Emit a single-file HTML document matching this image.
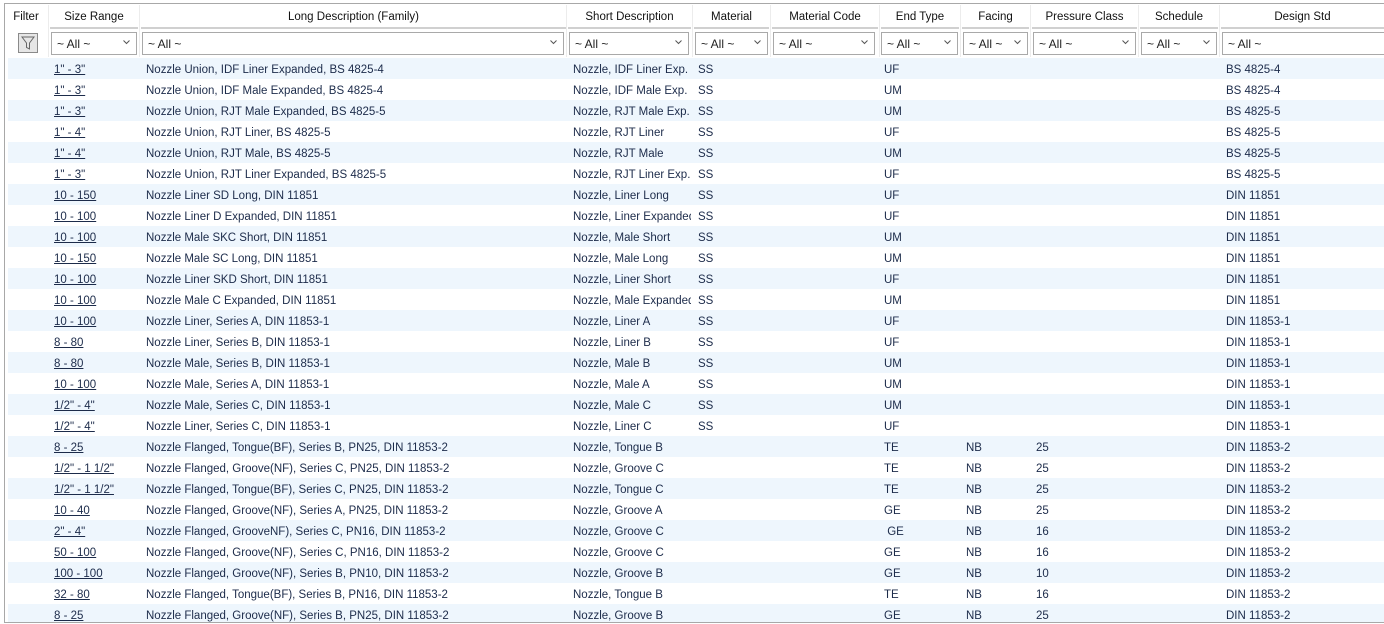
<!DOCTYPE html>
<html><head><meta charset="utf-8"><style>
*{margin:0;padding:0;box-sizing:border-box}
body{width:1384px;height:624px;background:#fff;font-family:"Liberation Sans",sans-serif;font-size:11.5px;position:relative;overflow:hidden}
.frame{position:absolute;left:4px;top:3px;width:1390px;height:620px;border:1px solid #a8a8a8}
.h{position:absolute;top:11px;text-align:center;color:#111;font-size:11.5px}
.hl{position:absolute;top:27px;height:2px;background:#d0d0d0}
.vs{position:absolute;top:5px;width:1px;height:52px;background:#ececec}
.cb{position:absolute;top:32px;height:23px;border:1px solid #a9a9a9;background:#fff;color:#222;padding-left:5px;line-height:22px;font-size:12px}
.cb svg{position:absolute;right:6px;top:7px}
.r{position:absolute;left:8px;width:1380px;height:21px}
.r.a{background:#eef6fd}
.r span{position:absolute;top:6px;color:#1c2b4a;white-space:nowrap;font-size:11.5px}
.r span.s{left:46px;text-decoration:underline}
.r span.l{left:138px}.r span.sd{left:565px;width:118px;overflow:hidden}.r span.m{left:690px}.r span.e{left:876px}.r span.f{left:958px}.r span.p{left:1028px}.r span.d{left:1218px}
.fb{position:absolute;left:18px;top:33px;width:20px;height:20px;border:1px solid #8a8a8a;background:#e6e6e6}
</style></head><body>
<div class="frame"></div>
<div class="h" style="left:5px;width:42px">Filter</div>
<div class="h" style="left:50px;width:88px">Size Range</div>
<div class="h" style="left:141px;width:425px">Long Description (Family)</div>
<div class="h" style="left:568px;width:123px">Short Description</div>
<div class="h" style="left:694px;width:75px">Material</div>
<div class="h" style="left:772px;width:106px">Material Code</div>
<div class="h" style="left:881px;width:78px">End Type</div>
<div class="h" style="left:962px;width:67px">Facing</div>
<div class="h" style="left:1032px;width:105px">Pressure Class</div>
<div class="h" style="left:1140px;width:78px">Schedule</div>
<div class="h" style="left:1221px;width:163px">Design Std</div>
<div class="hl" style="left:50px;width:88px"></div><div class="hl" style="left:141px;width:425px"></div><div class="hl" style="left:568px;width:123px"></div><div class="hl" style="left:694px;width:75px"></div><div class="hl" style="left:772px;width:106px"></div><div class="hl" style="left:881px;width:78px"></div><div class="hl" style="left:962px;width:67px"></div><div class="hl" style="left:1032px;width:105px"></div><div class="hl" style="left:1140px;width:78px"></div><div class="hl" style="left:1221px;width:163px"></div>
<div class="vs" style="left:48px"></div><div class="vs" style="left:139px"></div><div class="vs" style="left:566px"></div><div class="vs" style="left:692px"></div><div class="vs" style="left:770px"></div><div class="vs" style="left:879px"></div><div class="vs" style="left:960px"></div><div class="vs" style="left:1030px"></div><div class="vs" style="left:1138px"></div><div class="vs" style="left:1219px"></div>
<div class="fb"><svg width="18" height="18" viewBox="0 0 18 18"><path d="M3 3h12l-4.5 6v6l-3-1.5V9z" fill="none" stroke="#666" stroke-width="1"/></svg></div>
<div class="cb" style="left:51px;width:86px">~ All ~<svg width="7" height="5"><path d="M0.5 0.5L3.5 3.5L6.5 0.5" fill="none" stroke="#555"/></svg></div>
<div class="cb" style="left:142px;width:422px">~ All ~<svg width="7" height="5"><path d="M0.5 0.5L3.5 3.5L6.5 0.5" fill="none" stroke="#555"/></svg></div>
<div class="cb" style="left:569px;width:120px">~ All ~<svg width="7" height="5"><path d="M0.5 0.5L3.5 3.5L6.5 0.5" fill="none" stroke="#555"/></svg></div>
<div class="cb" style="left:695px;width:73px">~ All ~<svg width="7" height="5"><path d="M0.5 0.5L3.5 3.5L6.5 0.5" fill="none" stroke="#555"/></svg></div>
<div class="cb" style="left:773px;width:102px">~ All ~<svg width="7" height="5"><path d="M0.5 0.5L3.5 3.5L6.5 0.5" fill="none" stroke="#555"/></svg></div>
<div class="cb" style="left:881px;width:77px">~ All ~<svg width="7" height="5"><path d="M0.5 0.5L3.5 3.5L6.5 0.5" fill="none" stroke="#555"/></svg></div>
<div class="cb" style="left:963px;width:65px">~ All ~<svg width="7" height="5"><path d="M0.5 0.5L3.5 3.5L6.5 0.5" fill="none" stroke="#555"/></svg></div>
<div class="cb" style="left:1033px;width:103px">~ All ~<svg width="7" height="5"><path d="M0.5 0.5L3.5 3.5L6.5 0.5" fill="none" stroke="#555"/></svg></div>
<div class="cb" style="left:1141px;width:76px">~ All ~<svg width="7" height="5"><path d="M0.5 0.5L3.5 3.5L6.5 0.5" fill="none" stroke="#555"/></svg></div>
<div class="cb" style="left:1222px;width:170px">~ All ~</div>

<div class="r a" style="top:58px"><span class="s">1" - 3"</span><span class="l">Nozzle Union, IDF Liner Expanded, BS 4825-4</span><span class="sd">Nozzle, IDF Liner Exp.</span><span class="m">SS</span><span class="e">UF</span><span class="d">BS 4825-4</span></div>
<div class="r" style="top:79px"><span class="s">1" - 3"</span><span class="l">Nozzle Union, IDF Male Expanded, BS 4825-4</span><span class="sd">Nozzle, IDF Male Exp.</span><span class="m">SS</span><span class="e">UM</span><span class="d">BS 4825-4</span></div>
<div class="r a" style="top:100px"><span class="s">1" - 3"</span><span class="l">Nozzle Union, RJT Male Expanded, BS 4825-5</span><span class="sd">Nozzle, RJT Male Exp.</span><span class="m">SS</span><span class="e">UM</span><span class="d">BS 4825-5</span></div>
<div class="r" style="top:121px"><span class="s">1" - 4"</span><span class="l">Nozzle Union, RJT Liner, BS 4825-5</span><span class="sd">Nozzle, RJT Liner</span><span class="m">SS</span><span class="e">UF</span><span class="d">BS 4825-5</span></div>
<div class="r a" style="top:142px"><span class="s">1" - 4"</span><span class="l">Nozzle Union, RJT Male, BS 4825-5</span><span class="sd">Nozzle, RJT Male</span><span class="m">SS</span><span class="e">UM</span><span class="d">BS 4825-5</span></div>
<div class="r" style="top:163px"><span class="s">1" - 3"</span><span class="l">Nozzle Union, RJT Liner Expanded, BS 4825-5</span><span class="sd">Nozzle, RJT Liner Exp.</span><span class="m">SS</span><span class="e">UF</span><span class="d">BS 4825-5</span></div>
<div class="r a" style="top:184px"><span class="s">10 - 150</span><span class="l">Nozzle Liner SD Long, DIN 11851</span><span class="sd">Nozzle, Liner Long</span><span class="m">SS</span><span class="e">UF</span><span class="d">DIN 11851</span></div>
<div class="r" style="top:205px"><span class="s">10 - 100</span><span class="l">Nozzle Liner D Expanded, DIN 11851</span><span class="sd">Nozzle, Liner Expanded</span><span class="m">SS</span><span class="e">UF</span><span class="d">DIN 11851</span></div>
<div class="r a" style="top:226px"><span class="s">10 - 100</span><span class="l">Nozzle Male SKC Short, DIN 11851</span><span class="sd">Nozzle, Male Short</span><span class="m">SS</span><span class="e">UM</span><span class="d">DIN 11851</span></div>
<div class="r" style="top:247px"><span class="s">10 - 150</span><span class="l">Nozzle Male SC Long, DIN 11851</span><span class="sd">Nozzle, Male Long</span><span class="m">SS</span><span class="e">UM</span><span class="d">DIN 11851</span></div>
<div class="r a" style="top:268px"><span class="s">10 - 100</span><span class="l">Nozzle Liner SKD Short, DIN 11851</span><span class="sd">Nozzle, Liner Short</span><span class="m">SS</span><span class="e">UF</span><span class="d">DIN 11851</span></div>
<div class="r" style="top:289px"><span class="s">10 - 100</span><span class="l">Nozzle Male C Expanded, DIN 11851</span><span class="sd">Nozzle, Male Expanded</span><span class="m">SS</span><span class="e">UM</span><span class="d">DIN 11851</span></div>
<div class="r a" style="top:310px"><span class="s">10 - 100</span><span class="l">Nozzle Liner, Series A, DIN 11853-1</span><span class="sd">Nozzle, Liner A</span><span class="m">SS</span><span class="e">UF</span><span class="d">DIN 11853-1</span></div>
<div class="r" style="top:331px"><span class="s">8 - 80</span><span class="l">Nozzle Liner, Series B, DIN 11853-1</span><span class="sd">Nozzle, Liner B</span><span class="m">SS</span><span class="e">UF</span><span class="d">DIN 11853-1</span></div>
<div class="r a" style="top:352px"><span class="s">8 - 80</span><span class="l">Nozzle Male, Series B, DIN 11853-1</span><span class="sd">Nozzle, Male B</span><span class="m">SS</span><span class="e">UM</span><span class="d">DIN 11853-1</span></div>
<div class="r" style="top:373px"><span class="s">10 - 100</span><span class="l">Nozzle Male, Series A, DIN 11853-1</span><span class="sd">Nozzle, Male A</span><span class="m">SS</span><span class="e">UM</span><span class="d">DIN 11853-1</span></div>
<div class="r a" style="top:394px"><span class="s">1/2" - 4"</span><span class="l">Nozzle Male, Series C, DIN 11853-1</span><span class="sd">Nozzle, Male C</span><span class="m">SS</span><span class="e">UM</span><span class="d">DIN 11853-1</span></div>
<div class="r" style="top:415px"><span class="s">1/2" - 4"</span><span class="l">Nozzle Liner, Series C, DIN 11853-1</span><span class="sd">Nozzle, Liner C</span><span class="m">SS</span><span class="e">UF</span><span class="d">DIN 11853-1</span></div>
<div class="r a" style="top:436px"><span class="s">8 - 25</span><span class="l">Nozzle Flanged, Tongue(BF), Series B, PN25, DIN 11853-2</span><span class="sd">Nozzle, Tongue B</span><span class="e">TE</span><span class="f">NB</span><span class="p">25</span><span class="d">DIN 11853-2</span></div>
<div class="r" style="top:457px"><span class="s">1/2" - 1 1/2"</span><span class="l">Nozzle Flanged, Groove(NF), Series C, PN25, DIN 11853-2</span><span class="sd">Nozzle, Groove C</span><span class="e">TE</span><span class="f">NB</span><span class="p">25</span><span class="d">DIN 11853-2</span></div>
<div class="r a" style="top:478px"><span class="s">1/2" - 1 1/2"</span><span class="l">Nozzle Flanged, Tongue(BF), Series C, PN25, DIN 11853-2</span><span class="sd">Nozzle, Tongue C</span><span class="e">TE</span><span class="f">NB</span><span class="p">25</span><span class="d">DIN 11853-2</span></div>
<div class="r" style="top:499px"><span class="s">10 - 40</span><span class="l">Nozzle Flanged, Groove(NF), Series A, PN25, DIN 11853-2</span><span class="sd">Nozzle, Groove A</span><span class="e">GE</span><span class="f">NB</span><span class="p">25</span><span class="d">DIN 11853-2</span></div>
<div class="r a" style="top:520px"><span class="s">2" - 4"</span><span class="l">Nozzle Flanged, GrooveNF), Series C, PN16, DIN 11853-2</span><span class="sd">Nozzle, Groove C</span><span class="e">&nbsp;GE</span><span class="f">NB</span><span class="p">16</span><span class="d">DIN 11853-2</span></div>
<div class="r" style="top:541px"><span class="s">50 - 100</span><span class="l">Nozzle Flanged, Groove(NF), Series C, PN16, DIN 11853-2</span><span class="sd">Nozzle, Groove C</span><span class="e">GE</span><span class="f">NB</span><span class="p">16</span><span class="d">DIN 11853-2</span></div>
<div class="r a" style="top:562px"><span class="s">100 - 100</span><span class="l">Nozzle Flanged, Groove(NF), Series B, PN10, DIN 11853-2</span><span class="sd">Nozzle, Groove B</span><span class="e">GE</span><span class="f">NB</span><span class="p">10</span><span class="d">DIN 11853-2</span></div>
<div class="r" style="top:583px"><span class="s">32 - 80</span><span class="l">Nozzle Flanged, Tongue(BF), Series B, PN16, DIN 11853-2</span><span class="sd">Nozzle, Tongue B</span><span class="e">TE</span><span class="f">NB</span><span class="p">16</span><span class="d">DIN 11853-2</span></div>
<div class="r a" style="top:604px;height:18px"><span class="s">8 - 25</span><span class="l">Nozzle Flanged, Groove(NF), Series B, PN25, DIN 11853-2</span><span class="sd">Nozzle, Groove B</span><span class="e">GE</span><span class="f">NB</span><span class="p">25</span><span class="d">DIN 11853-2</span></div>
</body></html>
